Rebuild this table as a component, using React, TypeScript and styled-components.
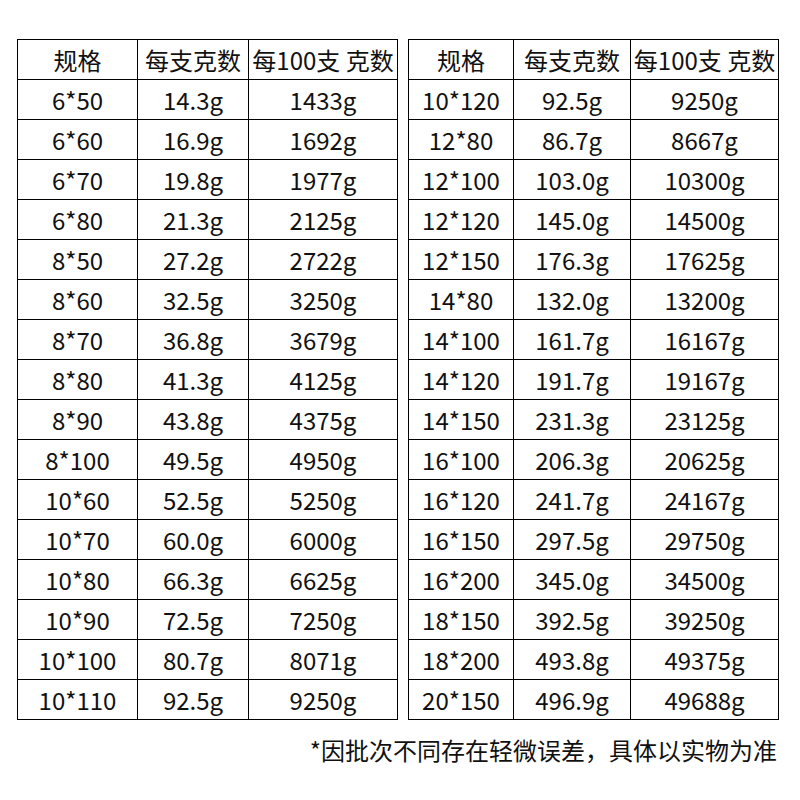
import styled, { createGlobalStyle } from "styled-components";

const GlobalStyle = createGlobalStyle`
  body {
    margin: 0;
    background: #fff;
    font-family: "Noto Sans CJK SC", "Noto Sans", sans-serif;
    color: #111;
  }
`;

const Page = styled.div`
  display: inline-flex;
  flex-direction: column;
  padding: 39px 0 0 17px;
`;

const Tables = styled.div`
  display: flex;
  gap: 10px;
`;

const Grid = styled.div<{ $cols: string }>`
  display: grid;
  grid-template-columns: ${(p) => p.$cols};
  grid-auto-rows: 40px;
  border-left: 1px solid #000;
  border-top: 1px solid #000;
`;

const Cell = styled.div`
  box-sizing: border-box;
  display: flex;
  align-items: center;
  justify-content: center;
  border-right: 1px solid #000;
  border-bottom: 1px solid #000;
  font-size: 24px;
  line-height: 1;
  white-space: nowrap;
  padding-top: 1px;
`;

const Note = styled.p`
  margin: 14px 2px 0 0;
  text-align: right;
  font-size: 24px;
  line-height: 32px;
`;

const header = ["规格", "每支克数", "每100支 克数"];

const leftRows = [
  ["6*50", "14.3g", "1433g"],
  ["6*60", "16.9g", "1692g"],
  ["6*70", "19.8g", "1977g"],
  ["6*80", "21.3g", "2125g"],
  ["8*50", "27.2g", "2722g"],
  ["8*60", "32.5g", "3250g"],
  ["8*70", "36.8g", "3679g"],
  ["8*80", "41.3g", "4125g"],
  ["8*90", "43.8g", "4375g"],
  ["8*100", "49.5g", "4950g"],
  ["10*60", "52.5g", "5250g"],
  ["10*70", "60.0g", "6000g"],
  ["10*80", "66.3g", "6625g"],
  ["10*90", "72.5g", "7250g"],
  ["10*100", "80.7g", "8071g"],
  ["10*110", "92.5g", "9250g"],
];

const rightRows = [
  ["10*120", "92.5g", "9250g"],
  ["12*80", "86.7g", "8667g"],
  ["12*100", "103.0g", "10300g"],
  ["12*120", "145.0g", "14500g"],
  ["12*150", "176.3g", "17625g"],
  ["14*80", "132.0g", "13200g"],
  ["14*100", "161.7g", "16167g"],
  ["14*120", "191.7g", "19167g"],
  ["14*150", "231.3g", "23125g"],
  ["16*100", "206.3g", "20625g"],
  ["16*120", "241.7g", "24167g"],
  ["16*150", "297.5g", "29750g"],
  ["16*200", "345.0g", "34500g"],
  ["18*150", "392.5g", "39250g"],
  ["18*200", "493.8g", "49375g"],
  ["20*150", "496.9g", "49688g"],
];

function WeightTable({ cols, rows }: { cols: string; rows: string[][] }) {
  return (
    <Grid $cols={cols}>
      {[header, ...rows].flat().map((text, i) => (
        <Cell key={i}>{text}</Cell>
      ))}
    </Grid>
  );
}

export default function App() {
  return (
    <>
      <GlobalStyle />
      <Page>
        <Tables>
          <WeightTable cols="120px 111px 149px" rows={leftRows} />
          <WeightTable cols="105px 117px 148px" rows={rightRows} />
        </Tables>
        <Note>*因批次不同存在轻微误差，具体以实物为准</Note>
      </Page>
    </>
  );
}
